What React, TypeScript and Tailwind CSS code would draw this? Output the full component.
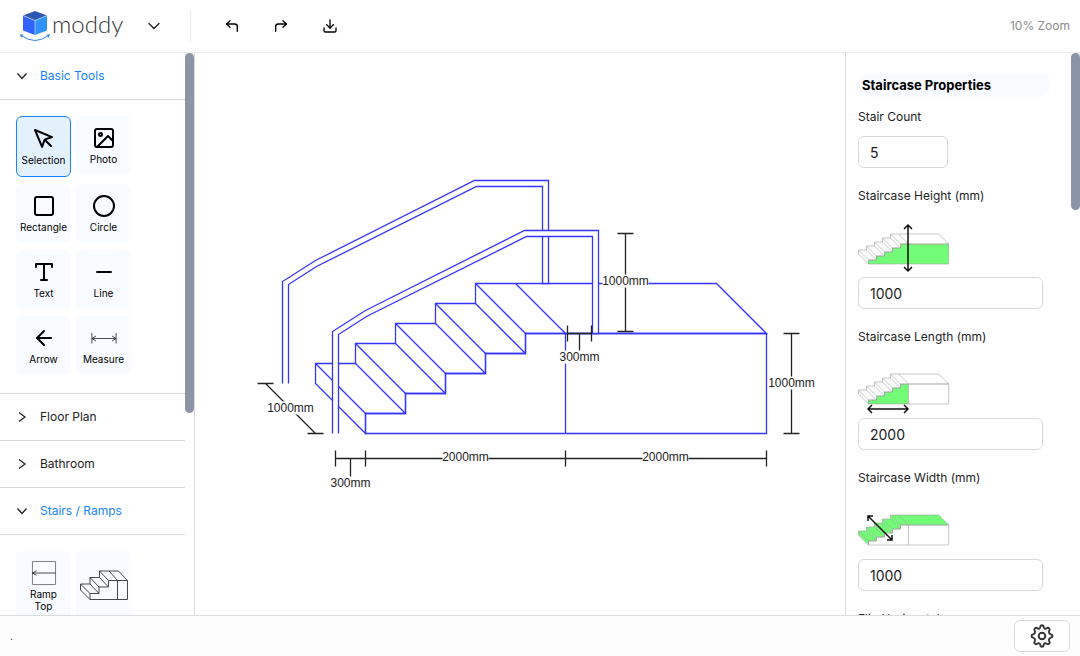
import { useState, type ReactNode } from "react";
import type { IconType } from "react-icons";
import {
  FiArrowLeft,
  FiChevronDown,
  FiCircle,
  FiCornerUpLeft,
  FiCornerUpRight,
  FiDownload,
  FiImage,
  FiMinus,
  FiMousePointer,
  FiSquare,
  FiType,
} from "react-icons/fi";

// Staircase geometry: origin is the front bottom corner, 100 units = 1000mm
const FRONT = "M0 0V-20H40V-40H80V-60H120V-80H160V-100H401V0Z";
const STAIR_SIDE = "M0 0V-20H40V-40H80V-60H120V-80H160V-100H200V0Z";
const TOP =
  "M0 0L-50 -50V-70H-10V-90H30V-110H70V-130H110V-150H351L401 -100H160V-80H120V-60H80V-40H40V-20H0Z";
const EDGES =
  "M-50 -70L0 -20M-10 -70L40 -20M-10 -90L40 -40M30 -90L80 -40M30 -110L80 -60M70 -110L120 -60M70 -130L120 -80M110 -130L160 -80M110 -150L160 -100M150 -150L200 -100";
const RAIL =
  "M-33 0V-102L0 -123L159 -203H233V-100H227V-197H161L1 -117L-27 -99V0";

const TICK = 8;

function DimText({ x, y, children }: { x: number; y: number; children: string }) {
  const w = children.length > 5 ? 46 : 40;
  return (
    <>
      <rect x={x - w / 2} y={y - 6} width={w} height={13} fill="#fff" stroke="none" />
      <text
        x={x}
        y={y + 4}
        textAnchor="middle"
        fill="#222"
        stroke="none"
        className="font-['Liberation_Sans',Arial,sans-serif] text-[12px]"
      >
        {children}
      </text>
    </>
  );
}

function StairDrawing() {
  return (
    <svg
      viewBox="-170.5 -380.5 650 562"
      className="h-[562px] w-[650px] shrink-0"
      role="img"
      aria-label="Staircase drawing"
    >
      <g fill="none" stroke="#3434ff" strokeWidth="1.3">
        <path d={TOP} />
        <path d={FRONT} />
        <path d={EDGES} />
        <path d="M200 -100V0" />
        <path d={RAIL} fill="#fff" transform="translate(-50 -50)" />
        <path d={RAIL} fill="#fff" />
      </g>
      <g fill="none" stroke="#222" strokeWidth="1.3">
        <path d={`M260 -200V-102M${260 - TICK} -200h16M${260 - TICK} -102h16`} />
        <path d="M202 -100H226M202 -108v16M226 -108v16M214 -100V-80" />
        <path d={`M426 -100V0M${426 - TICK} -100h16M${426 - TICK} 0h16`} />
        <path d="M-30 25H401M-30 17v16M0 17v16M200 17v16M401 17v16M-15 25V45" />
        <path d="M-100 -50L-50 0M-108 -50h16M-58 0h16" />
        <DimText x={260} y={-153}>1000mm</DimText>
        <DimText x={214} y={-77}>300mm</DimText>
        <DimText x={426} y={-51}>1000mm</DimText>
        <DimText x={100} y={23}>2000mm</DimText>
        <DimText x={300} y={23}>2000mm</DimText>
        <DimText x={-75} y={-26}>1000mm</DimText>
        <DimText x={-15} y={49}>300mm</DimText>
      </g>
    </svg>
  );
}

type Measure = "height" | "length" | "width";

const figures: Record<Measure, { fill: string; y: number; arrow: string }> = {
  height: { fill: FRONT, y: 58, arrow: "M50 19V65M46 23L50 19L54 23M46 61L50 65L54 61" },
  length: { fill: STAIR_SIDE, y: 57, arrow: "M10 62H50M14 58L10 62L14 66M46 58L50 62L46 66" },
  width: { fill: TOP, y: 57, arrow: "M10 28L34 52M10 33V28H15M34 47V52H29" },
};

function MeasureFigure({ kind }: { kind: Measure }) {
  const f = figures[kind];
  return (
    <svg viewBox="0 0 96 71" className="h-[71px] w-24" fill="none" aria-hidden="true">
      <g transform={`translate(10.5 ${f.y}) scale(0.2)`} stroke="#a3a3a3" strokeWidth="3">
        <path d={f.fill} fill="#72fb76" stroke="none" />
        <path d={TOP} />
        <path d={FRONT} />
        <path d={EDGES} />
        {kind !== "height" && <path d="M200 -100V0" />}
      </g>
      <path d={f.arrow} stroke="#111" strokeWidth="1.5" />
    </svg>
  );
}

function Logo() {
  return (
    <svg viewBox="0 0 30 32" className="h-8 w-[30px]" aria-hidden="true">
      <path d="M15 1L27 5.5L15 10.5L3 5.5Z" fill="#2d57b2" />
      <path d="M3 5.5L15 10.5V25L3 20.5Z" fill="#3063ff" />
      <path d="M27 5.5L15 10.5V25L27 20.5Z" fill="#2f93fc" />
      <path d="M3 5.5L15 10.5L27 5.5M15 10.5V25" fill="none" stroke="#dbe8ff" strokeWidth="0.6" />
      <path d="M1.5 25.5Q15 35.5 28.5 25.5" fill="none" stroke="#2f86e8" strokeWidth="1" />
      <path d="M0 24.2L3.6 24.8L1.2 27.8ZM30 24.2L26.4 24.8L28.8 27.8Z" fill="#2f86e8" />
    </svg>
  );
}

function MeasureIcon() {
  return (
    <svg viewBox="0 0 26 24" className="h-6 w-[26px]" fill="none" stroke="#333" strokeWidth="0.9">
      <path d="M0.9 7V17.5M25.1 7V17.5M1 12.5H25M5 10L1 12.5L5 15M21 10L25 12.5L21 15" />
    </svg>
  );
}

function RampIcon() {
  return (
    <svg viewBox="0 0 26 26" className="h-6 w-6 overflow-visible" fill="none" stroke="#666" strokeWidth="0.9">
      <path d="M0.5 0.5H25.5V25.5H0.5Z" />
      <path d="M0.5 13H25.5M5 10.5L0.5 13L5 15.5" stroke="#222" />
    </svg>
  );
}

function StairsIcon() {
  return (
    <svg viewBox="0 0 50 31" className="h-[31px] w-[50px]" fill="none" stroke="#333" strokeWidth="0.9" strokeLinejoin="round">
      <path d="M11 29.5V23.5H20V17H29.5V10.5H48.5V29.5ZM38.5 10.5V29.5" />
      <path d="M11 29.5L1.5 20V14H11V7.5H20.5V1H39.5L48.5 10.5" />
      <path d="M1.5 14L11 23.5M11 14L20 23.5M11 7.5L20 17M20.5 7.5L29.5 17M20.5 1L29.5 10.5M30 1L38.5 10.5" />
    </svg>
  );
}

function GearIcon() {
  return (
    <svg viewBox="0 0 24 24" className="h-6 w-6" fill="none" stroke="#333" strokeWidth="1.9" strokeLinejoin="round">
      <circle cx="12" cy="12" r="3.3" />
      <path d="M10.3 3.2C10.6 .6 13.4 .6 13.7 3.2C13.9 4.5 15.3 5.1 16.4 4.4C18.5 2.9 20.6 5 19.2 7C18.6 8.3 19.2 9.8 20.6 10.2C23.2 10.7 23.2 13.3 20.6 13.8C19.2 14.2 18.6 15.7 19.2 17C20.6 19 18.5 21.1 16.4 19.6C15.3 18.9 13.9 19.5 13.7 20.8C13.4 23.4 10.6 23.4 10.3 20.8C10.1 19.5 8.7 18.9 7.6 19.6C5.5 21.1 3.4 19 4.8 17C5.4 15.7 4.8 14.2 3.4 13.8C.8 13.3 .8 10.7 3.4 10.2C4.8 9.8 5.4 8.3 4.8 7C3.4 5 5.5 2.9 7.6 4.4C8.7 5.1 10.1 4.5 10.3 3.2Z" />
    </svg>
  );
}

const basicTools: { label: string; icon: IconType | typeof MeasureIcon }[] = [
  { label: "Selection", icon: FiMousePointer },
  { label: "Photo", icon: FiImage },
  { label: "Rectangle", icon: FiSquare },
  { label: "Circle", icon: FiCircle },
  { label: "Text", icon: FiType },
  { label: "Line", icon: FiMinus },
  { label: "Arrow", icon: FiArrowLeft },
  { label: "Measure", icon: MeasureIcon },
];

function Section({ title, open, onToggle, children }: {
  title: string;
  open: boolean;
  onToggle: () => void;
  children?: ReactNode;
}) {
  return (
    <section>
      <button
        onClick={onToggle}
        aria-expanded={open}
        className={`flex h-[47px] w-full items-center gap-3 border-b border-[#d9d9d9] pl-4 text-[12px] ${
          open ? "text-[#1684ff]" : "text-[#222]"
        }`}
      >
        <svg viewBox="0 0 12 12" className="h-3 w-3" fill="none" stroke="#222" strokeWidth="1.3">
          <path d={open ? "M1.5 3.5L6 8.5L10.5 3.5" : "M3 1.5L9 6L3 10.5"} />
        </svg>
        {title}
      </button>
      {open && children}
    </section>
  );
}

function Scrollbar({ className }: { className: string }) {
  return (
    <div className="w-[9px] shrink-0">
      <div className={`w-full rounded-full bg-[#8c95a8] ${className}`} />
    </div>
  );
}

function Field({ id, label, value, kind }: {
  id: string;
  label: string;
  value: string;
  kind?: Measure;
}) {
  return (
    <div className="flex flex-col">
      <label htmlFor={id} className="text-[12px] leading-5 text-[#222]">
        {label}
      </label>
      {kind && <MeasureFigure kind={kind} />}
      <input
        id={id}
        defaultValue={value}
        className={`h-8 rounded-md border border-[#d9d9d9] bg-white px-[11px] text-[14px] text-[#222] outline-none focus:border-[#1684ff] ${
          kind ? "mr-2" : "mt-[9px] w-[90px]"
        }`}
      />
    </div>
  );
}

export default function App() {
  const [tool, setTool] = useState("Selection");
  const [open, setOpen] = useState<Record<string, boolean>>({ basic: true, stairs: true });

  const toggle = (key: string) => setOpen((o) => ({ ...o, [key]: !o[key] }));

  return (
    <div className="flex h-screen flex-col bg-white font-[Inter,sans-serif] text-[#222]">
      <header className="flex h-[53px] shrink-0 items-center border-b border-[#ebebeb] pl-5 pr-[10px]">
        <a href="#" className="flex items-center gap-[2px]">
          <Logo />
          <span className="w-[69px] pb-1 font-[Lato,sans-serif] text-[24px] leading-7 font-light text-[#333]">moddy</span>
        </a>
        <button aria-label="Project menu" className="ml-[23px] flex h-5 w-5 items-center justify-center">
          <FiChevronDown size={20} strokeWidth={1.6} />
        </button>
        <div className="ml-[26px] h-8 w-px bg-[#ebebeb]" />
        <div className="ml-[33px] flex gap-[33px] text-black">
          <button aria-label="Undo"><FiCornerUpLeft size={16} /></button>
          <button aria-label="Redo"><FiCornerUpRight size={16} /></button>
          <button aria-label="Download"><FiDownload size={16} /></button>
        </div>
        <span className="ml-auto text-[12px] text-[#8c8c8c]">10% Zoom</span>
      </header>

      <div className="flex min-h-0 flex-1">
        <aside className="flex w-[195px] shrink-0 overflow-hidden border-r border-[#dcdcdc]">
          <div className="min-w-0 flex-1">
            <Section title="Basic Tools" open={!!open.basic} onToggle={() => toggle("basic")}>
              <div className="grid grid-cols-[55px_55px] items-start gap-x-[5px] gap-y-[7px] border-b border-[#d9d9d9] px-4 pt-4 pb-[18px]">
                {basicTools.map(({ label, icon: Icon }) => (
                  <button
                    key={label}
                    onClick={() => setTool(label)}
                    className={`flex flex-col items-center gap-[3px] rounded-md py-[10px] text-black ${
                      tool === label ? "border border-[#1684ff] bg-[#e3f1fd]" : "bg-[#f8fbff]"
                    }`}
                  >
                    <Icon size={24} />
                    <span className="text-[10px] leading-3">{label}</span>
                  </button>
                ))}
              </div>
            </Section>
            <Section title="Floor Plan" open={!!open.floor} onToggle={() => toggle("floor")} />
            <Section title="Bathroom" open={!!open.bath} onToggle={() => toggle("bath")} />
            <Section title="Stairs / Ramps" open={!!open.stairs} onToggle={() => toggle("stairs")}>
              <div className="grid grid-cols-[55px_55px] gap-x-[5px] px-4 pt-4">
                <button className="flex flex-col items-center gap-[3px] rounded-md bg-[#f8fbff] px-2 py-[10px] text-black">
                  <RampIcon />
                  <span className="text-[10px] leading-3">Ramp Top</span>
                </button>
                <button aria-label="Stairs" className="flex items-center justify-center rounded-md bg-[#f8fbff] pb-[2px]">
                  <StairsIcon />
                </button>
              </div>
            </Section>
          </div>
          <Scrollbar className="h-[64%]" />
        </aside>

        <main className="flex min-w-0 flex-1 items-center justify-center overflow-hidden">
          <StairDrawing />
        </main>

        <aside className="flex w-[235px] shrink-0 overflow-hidden border-l border-[#dcdcdc]">
          <div className="flex min-w-0 flex-1 flex-col pt-5 pr-5 pl-3">
            <h2 className="mb-[10px] rounded-full bg-[#f8fbff] px-1 text-[13px] leading-6 font-bold text-black">
              Staircase Properties
            </h2>
            <div className="flex flex-col gap-[18px]">
              <Field id="count" label="Stair Count" value="5" />
              <Field id="height" label="Staircase Height (mm)" value="1000" kind="height" />
              <Field id="length" label="Staircase Length (mm)" value="2000" kind="length" />
              <Field id="width" label="Staircase Width (mm)" value="1000" kind="width" />
              <Field id="flip" label="Flip Horizontal" value="" />
            </div>
          </div>
          <Scrollbar className="h-[28%]" />
        </aside>
      </div>

      <footer className="flex h-[41px] shrink-0 items-center justify-between border-t border-[#dcdcdc] bg-[#fdfdfd] pr-[10px] pl-[10px]">
        <span className="text-[10px]">.</span>
        <button
          aria-label="Settings"
          className="flex h-8 w-14 items-center justify-center rounded-md border border-[#d9d9d9] bg-white"
        >
          <GearIcon />
        </button>
      </footer>
    </div>
  );
}
